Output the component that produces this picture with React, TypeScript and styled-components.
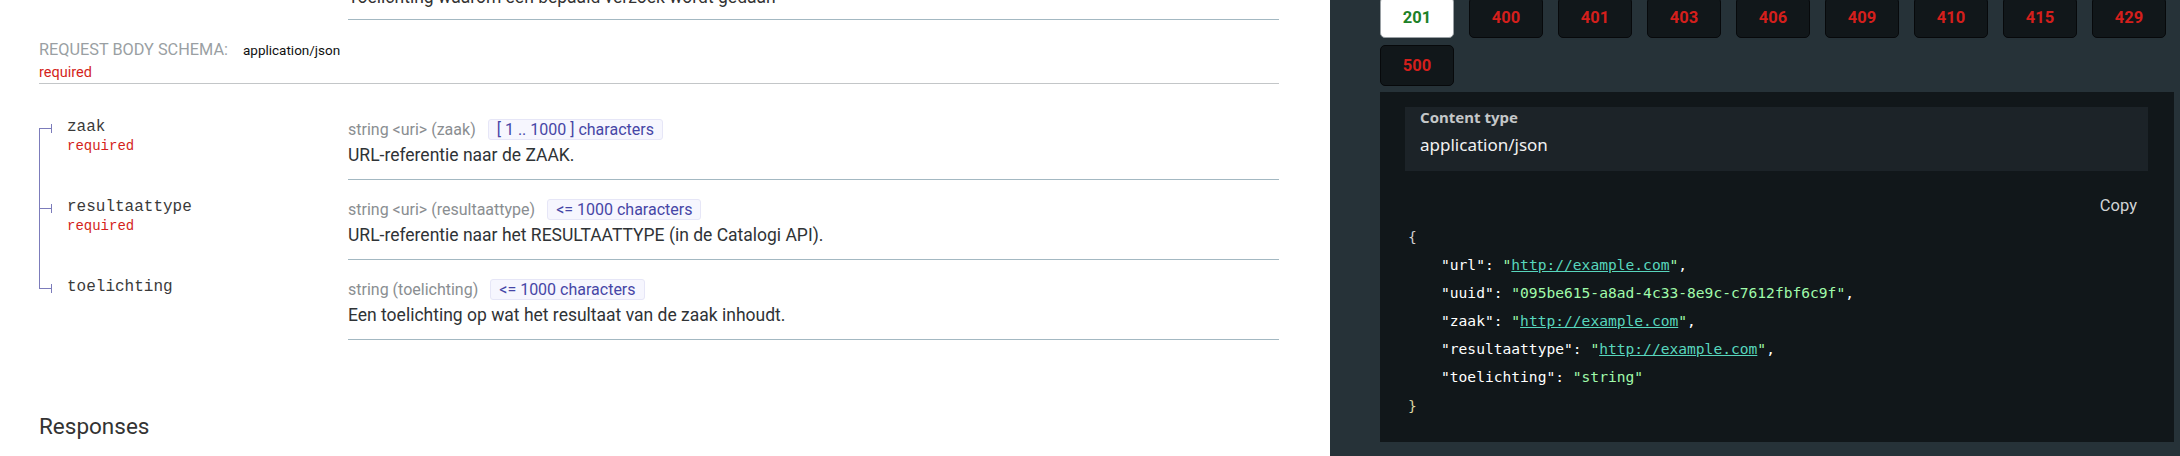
import styled, { createGlobalStyle } from 'styled-components'

const GlobalStyle = createGlobalStyle`
  html, body {
    margin: 0;
    padding: 0;
    width: 2180px;
    height: 456px;
    overflow: hidden;
    background: #fff;
  }
`

const Page = styled.div`
  display: flex;
  width: 2180px;
  height: 456px;
  overflow: hidden;
`

const Main = styled.div`
  width: 1330px;
  flex-shrink: 0;
  box-sizing: border-box;
  padding: 0 51px 0 39px;
  background: #fff;
  font-family: Roboto, "Liberation Sans", sans-serif;
  color: #333;
`

const PrevRow = styled.div`
  margin-top: -15px;
  margin-left: 309px;
  padding-bottom: 10px;
  border-bottom: 1px solid #a3b8c2;
  font-size: 17.5px;
  line-height: 24px;
`

const SchemaHeader = styled.div`
  margin-top: 20px;
  padding-bottom: 1px;
  border-bottom: 1px solid #c3c6c8;
`

const SchemaTitle = styled.div`
  display: flex;
  align-items: center;
  gap: 15px;
  line-height: 20px;
`

const SchemaLabel = styled.span`
  font-size: 16.3px;
  color: #9a9fa3;
  text-transform: uppercase;
`

const SchemaType = styled.span`
  font-size: 13.5px;
  color: #111;
`

const RequiredText = styled.div`
  margin-top: 4px;
  font-size: 14.5px;
  line-height: 18px;
  color: #d41f1c;
`

const Props = styled.div`
  margin-top: 16px;
  display: flex;
  flex-direction: column;
`

const PropRow = styled.div`
  display: flex;
`

const NameCell = styled.div<{ $first?: boolean; $last?: boolean }>`
  position: relative;
  width: 309px;
  flex-shrink: 0;
  box-sizing: border-box;
  padding: 17px 0 0 28px;
  background-image: linear-gradient(#7c7cbb, #7c7cbb);
  background-repeat: no-repeat;
  background-position: ${p => (p.$first ? '0 28px' : '0 0')};
  background-size: ${p =>
    p.$first ? '1px calc(100% - 28px)' : p.$last ? '1px 29px' : '1px 100%'};

  &::before {
    content: '';
    position: absolute;
    left: 0;
    top: 28px;
    width: 13px;
    height: 1px;
    background: #7c7cbb;
  }
  &::after {
    content: '';
    position: absolute;
    left: 12px;
    top: 24px;
    width: 1px;
    height: 9px;
    background: #7c7cbb;
  }
`

const PropName = styled.div`
  font-family: "Liberation Mono", "DejaVu Sans Mono", monospace;
  font-size: 16px;
  line-height: 20px;
  color: #3a3a3a;
`

const PropRequired = styled.div`
  font-family: "Liberation Mono", "DejaVu Sans Mono", monospace;
  font-size: 14px;
  line-height: 18px;
  color: #d41f1c;
`

const ValueCell = styled.div`
  flex: 1;
  padding: 19px 0 12px;
  border-bottom: 1px solid #a3b8c2;
`

const TypeLine = styled.div`
  display: flex;
  align-items: center;
  height: 20px;
  font-size: 16px;
  color: #8a8e91;
`

const Badge = styled.span`
  margin-left: 12px;
  padding: 0 8px;
  height: 19px;
  line-height: 19px;
  border: 1px solid #e6e6f7;
  border-radius: 3px;
  background: #f6f6fe;
  color: #4646a6;
  font-size: 16px;
`

const Desc = styled.div`
  margin-top: 4px;
  font-size: 17.5px;
  line-height: 24px;
  color: #2f3336;
`

const ResponsesTitle = styled.h2`
  margin: 73px 0 0;
  font-size: 22.5px;
  font-weight: 400;
  line-height: 26px;
  color: #333;
`

const Side = styled.div`
  flex: 1;
  box-sizing: border-box;
  padding: 0 6px 0 50px;
  background: #263238;
  font-family: Roboto, "Liberation Sans", sans-serif;
`

const Tabs = styled.div`
  display: flex;
  flex-wrap: wrap;
  gap: 7px 15px;
  margin-top: -3px;
`

const Tab = styled.div<{ $active?: boolean; $ok?: boolean }>`
  width: 74px;
  height: 41px;
  box-sizing: border-box;
  display: flex;
  align-items: center;
  justify-content: center;
  border: 1px solid ${p => (p.$active ? '#9aa0a4' : '#07090b')};
  border-radius: 5px;
  background: ${p => (p.$active ? '#fff' : '#11171a')};
  color: ${p => (p.$ok ? '#1d8127' : '#d41f1c')};
  font-size: 16.5px;
  font-weight: 700;
`

const Sample = styled.div`
  margin-top: 6px;
  padding: 25px 26px 22px 25px;
  background: #11171a;
`

const ContentType = styled.div`
  background: #1c2328;
  padding: 0 15px 16px;
  font-family: "Noto Sans", "Open Sans", sans-serif;
`

const ContentLabel = styled.div`
  margin-top: -10px;
  line-height: 20px;
  font-size: 15px;
  font-weight: 700;
  color: #c4c7c9;
`

const ContentValue = styled.div`
  margin-top: 8px;
  line-height: 20px;
  font-size: 17px;
  color: #f2f2f2;
`

const CopyRow = styled.div`
  margin-top: 25px;
  padding-right: 11px;
  text-align: right;
  font-size: 16.5px;
  line-height: 20px;
  color: #d0d3d5;
`

const Code = styled.div`
  margin-top: 7px;
  padding-left: 3px;
  font-family: "DejaVu Sans Mono", "Liberation Mono", monospace;
  font-size: 14.6px;
  line-height: 28.1px;
  color: #fff;
`

const CodeLine = styled.div<{ $indent?: boolean }>`
  padding-left: ${p => (p.$indent ? '33px' : '0')};
  white-space: pre;
`

const Brace = styled.span<{ $close?: boolean }>`
  color: ${p => (p.$close ? '#d9d3a0' : '#cfcfcf')};
`

const Str = styled.span`
  color: #a0fbaa;
`

const Link = styled.span`
  color: #58d6bd;
  text-decoration: underline;
`

type Prop = { name: string; required?: boolean; type: string; limit: string; desc: string }

const props: Prop[] = [
  {
    name: 'zaak',
    required: true,
    type: 'string <uri> (zaak)',
    limit: '[ 1 .. 1000 ] characters',
    desc: 'URL-referentie naar de ZAAK.',
  },
  {
    name: 'resultaattype',
    required: true,
    type: 'string <uri> (resultaattype)',
    limit: '<= 1000 characters',
    desc: 'URL-referentie naar het RESULTAATTYPE (in de Catalogi API).',
  },
  {
    name: 'toelichting',
    type: 'string (toelichting)',
    limit: '<= 1000 characters',
    desc: 'Een toelichting op wat het resultaat van de zaak inhoudt.',
  },
]

const codes = ['201', '400', '401', '403', '406', '409', '410', '415', '429', '500']

const sample: { key: string; value: string; link?: boolean; last?: boolean }[] = [
  { key: 'url', value: 'http://example.com', link: true },
  { key: 'uuid', value: '095be615-a8ad-4c33-8e9c-c7612fbf6c9f' },
  { key: 'zaak', value: 'http://example.com', link: true },
  { key: 'resultaattype', value: 'http://example.com', link: true },
  { key: 'toelichting', value: 'string', last: true },
]

export default function App() {
  return (
    <>
      <GlobalStyle />
      <Page>
        <Main>
          <PrevRow>Toelichting waarom een bepaald verzoek wordt gedaan</PrevRow>
          <SchemaHeader>
            <SchemaTitle>
              <SchemaLabel>Request Body schema:</SchemaLabel>
              <SchemaType>application/json</SchemaType>
            </SchemaTitle>
            <RequiredText>required</RequiredText>
          </SchemaHeader>
          <Props>
            {props.map((p, i) => (
              <PropRow key={p.name}>
                <NameCell $first={i === 0} $last={i === props.length - 1}>
                  <PropName>{p.name}</PropName>
                  {p.required && <PropRequired>required</PropRequired>}
                </NameCell>
                <ValueCell>
                  <TypeLine>
                    {p.type}
                    <Badge>{p.limit}</Badge>
                  </TypeLine>
                  <Desc>{p.desc}</Desc>
                </ValueCell>
              </PropRow>
            ))}
          </Props>
          <ResponsesTitle>Responses</ResponsesTitle>
        </Main>
        <Side>
          <Tabs>
            {codes.map(c => (
              <Tab key={c} $active={c === '201'} $ok={c === '201'}>
                {c}
              </Tab>
            ))}
          </Tabs>
          <Sample>
            <ContentType>
              <ContentLabel>Content type</ContentLabel>
              <ContentValue>application/json</ContentValue>
            </ContentType>
            <CopyRow>Copy</CopyRow>
            <Code>
              <CodeLine>
                <Brace>{'{'}</Brace>
              </CodeLine>
              {sample.map(s => (
                <CodeLine $indent key={s.key}>
                  {`"${s.key}": `}
                  {s.link ? (
                    <Str>
                      "<Link>{s.value}</Link>"
                    </Str>
                  ) : (
                    <Str>{`"${s.value}"`}</Str>
                  )}
                  {s.last ? '' : ','}
                </CodeLine>
              ))}
              <CodeLine>
                <Brace $close>{'}'}</Brace>
              </CodeLine>
            </Code>
          </Sample>
        </Side>
      </Page>
    </>
  )
}
